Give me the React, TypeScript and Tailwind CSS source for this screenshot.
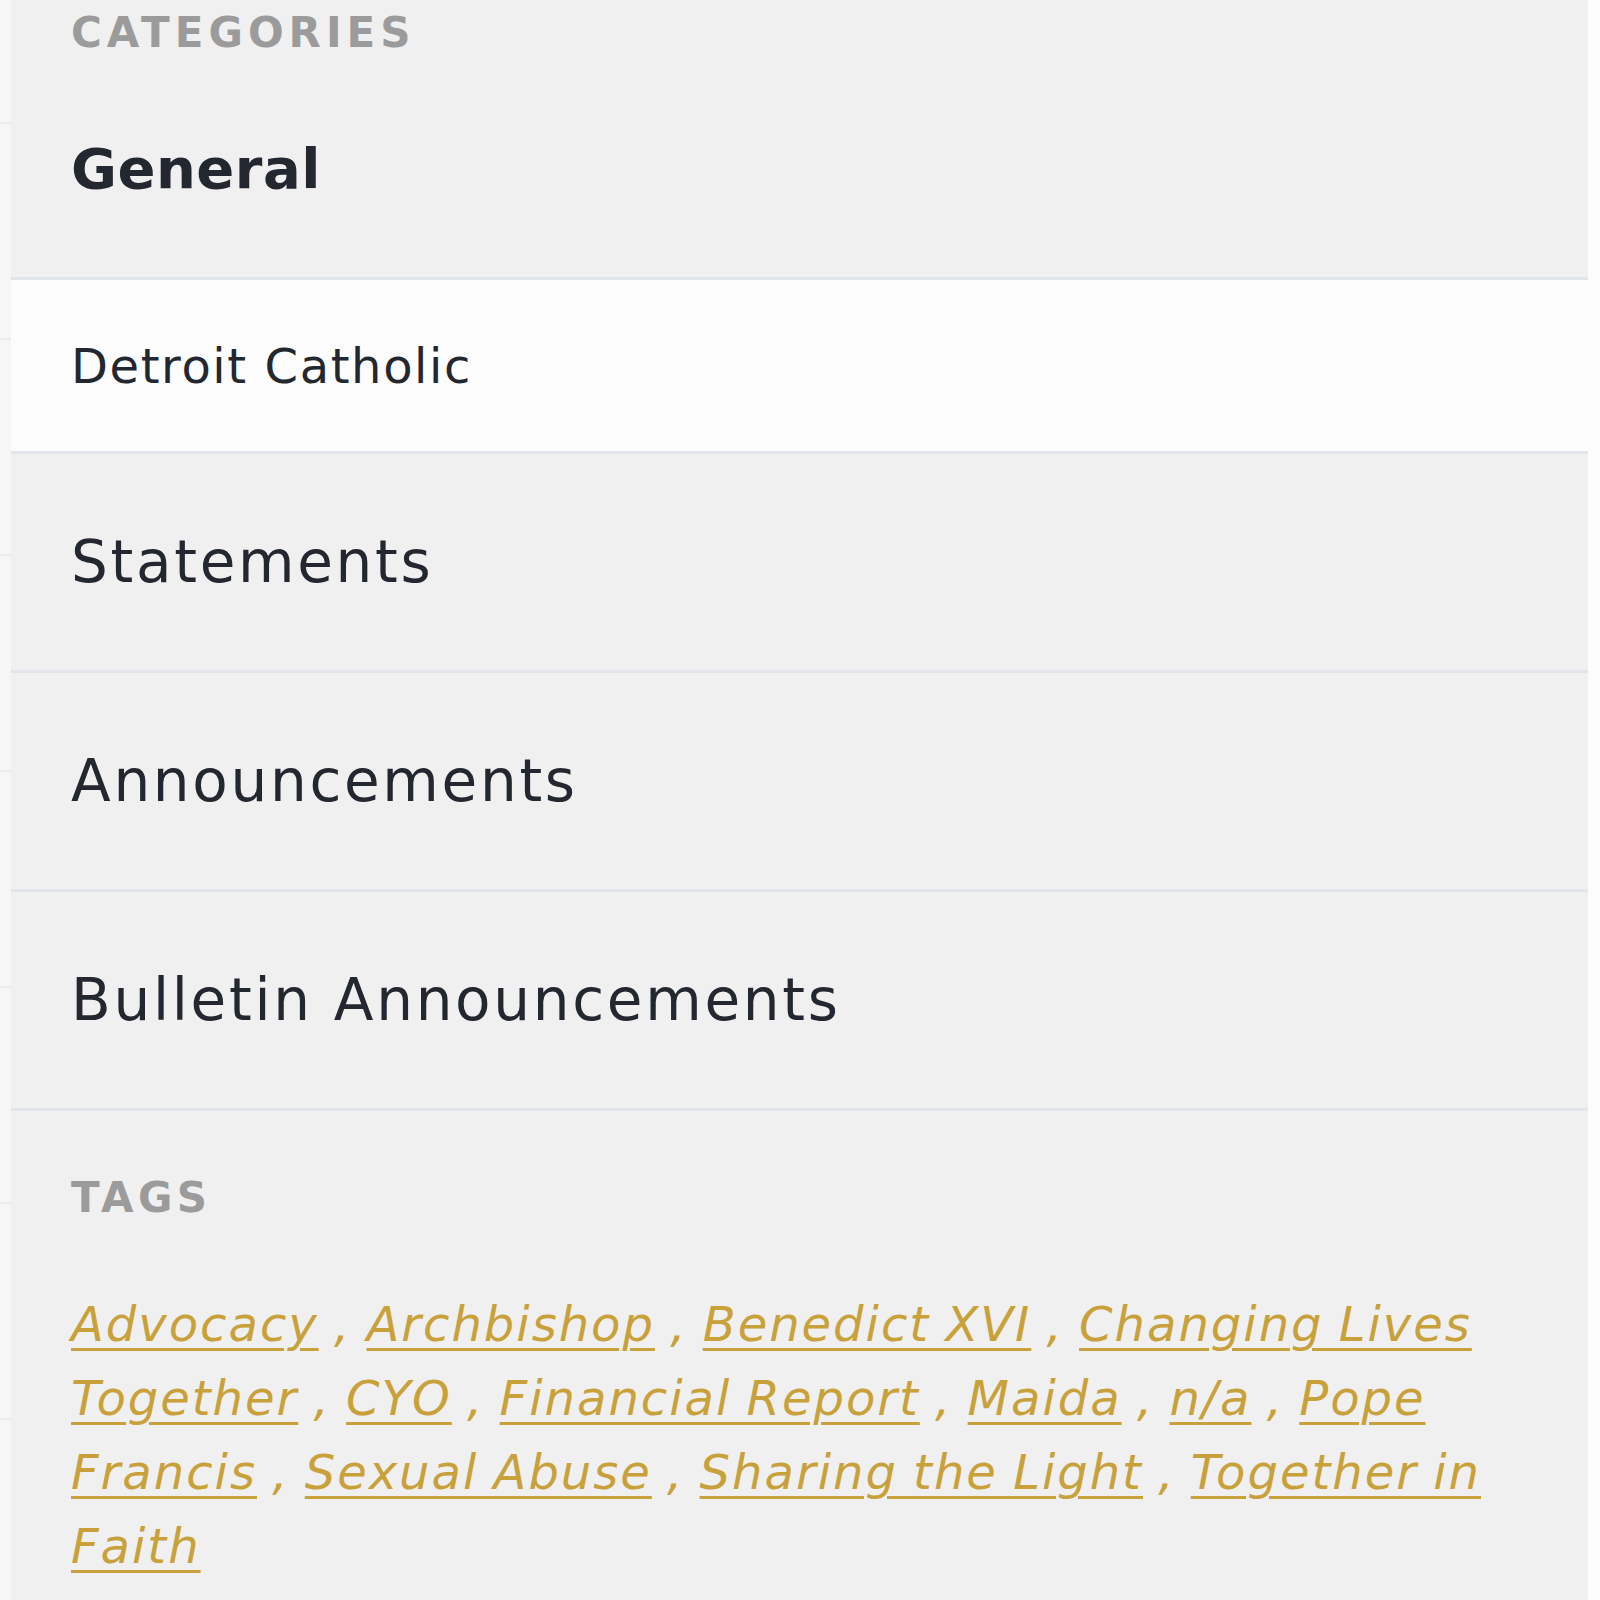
const categories = ["Statements", "Announcements", "Bulletin Announcements"];

const tags = [
    "Advocacy",
    "Archbishop",
    "Benedict XVI",
    "Changing Lives Together",
    "CYO",
    "Financial Report",
    "Maida",
    "n/a",
    "Pope Francis",
    "Sexual Abuse",
    "Sharing the Light",
    "Together in Faith",
];

function EdgeStrip() {
    return (
        <div className="w-[11px] shrink-0 bg-[#f6f6f6] flex flex-col">
            <div className="h-[124px] shrink-0 border-b-2 border-[#ebebeb]"></div>
            {[0, 1, 2, 3, 4, 5].map((i) => (
                <div key={i} className="h-[216px] shrink-0 border-b-2 border-[#ebebeb]"></div>
            ))}
        </div>
    );
}

function App() {
    return (
        <div className="w-full h-[1600px] bg-[#fcfcfc] flex overflow-hidden font-['DejaVu_Sans',sans-serif] text-[#23272f]">
            <EdgeStrip/>
            <aside className="w-[1577px] shrink-0 bg-[#f0f0f0] flex flex-col">
                <div className="h-[61px] shrink-0 pl-[60px] pt-[12px]">
                    <h3 className="text-[42px] leading-[42px] font-bold tracking-[5px] text-[#9b9b9b]">CATEGORIES</h3>
                </div>
                <div className="h-[219px] shrink-0 border-b-[3px] border-[#e1e4e9] flex items-center pl-[60px]">
                    <span className="text-[56px] leading-none font-bold tracking-[0.5px]">General</span>
                </div>
                <a href="#" className="h-[174px] shrink-0 bg-[#fcfcfc] border-b-[3px] border-[#e1e4e9] flex items-center pl-[60px]">
                    <span className="text-[48px] leading-none tracking-[1.6px]">Detroit Catholic</span>
                </a>
                {categories.map((c) => (
                    <a key={c} href="#" className="h-[219px] shrink-0 border-b-[3px] border-[#e1e4e9] flex items-center pl-[60px]">
                        <span className="text-[58px] leading-none tracking-[2.7px]">{c}</span>
                    </a>
                ))}
                <div className="pl-[60px] pr-[62px] pt-[66px]">
                    <h3 className="text-[42px] leading-[42px] font-bold tracking-[4.5px] text-[#9b9b9b]">TAGS</h3>
                    <p className="mt-[68px] text-[48px] leading-[74px] italic tracking-[2px] [word-spacing:-2px] text-[#c9a13b]">
                        {tags.map((t, i) => (
                            <span key={t}>
                                <a href="#" className="underline decoration-[3px] underline-offset-[7px]">{t}</a>
                                {i < tags.length - 1 ? " , " : ""}
                            </span>
                        ))}
                    </p>
                </div>
            </aside>
        </div>
    );
}

export default App;
